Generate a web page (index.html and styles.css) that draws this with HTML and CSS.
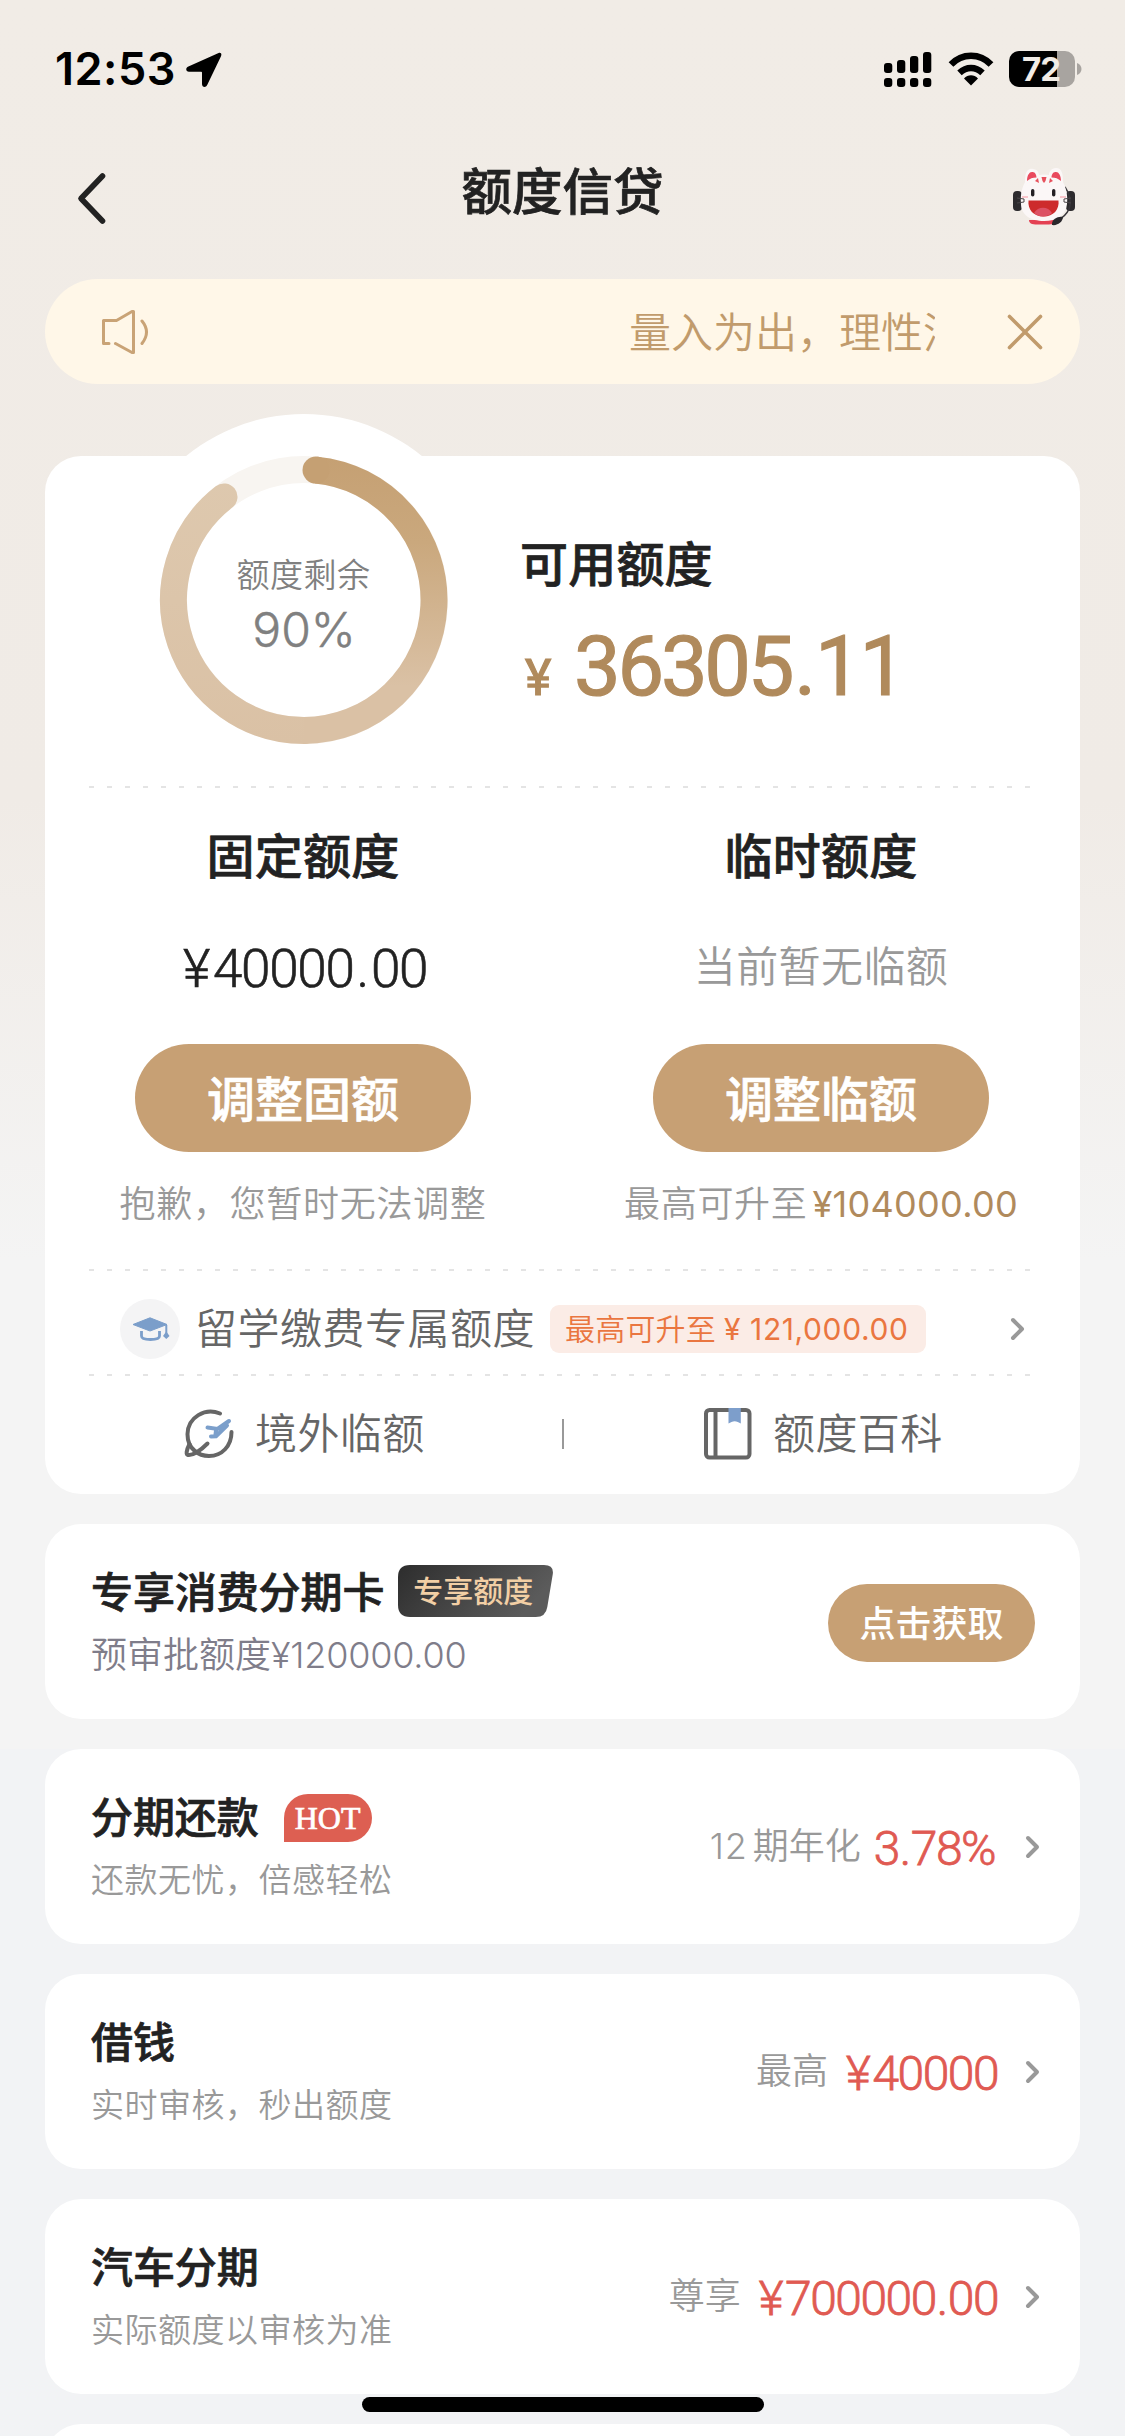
FILE: index.html
```html
<!DOCTYPE html>
<html lang="zh-CN">
<head>
<meta charset="utf-8">
<title>额度信贷</title>
<link rel="stylesheet" href="styles.css">
</head>
<body>
<div class="page">
  <div class="statusbar">
    <span class="clock">12:53</span>
    <svg class="location" width="36" height="36" viewBox="0 0 36 36"><path d="M32.6.9 2.4 14.4C-.9 15.9-.2 19.7 3 19.7h12.2c.5 0 .8.3.8.8V32c0 3.500 3.900 3.900 5.200 1L35 4.200C36 1.700 34.800 0 32.600.9z"/></svg>
    <svg class="signal" width="48" height="36" viewBox="0 0 48 36">
      <rect x="0" y="12" width="8.300" height="10" rx="3"/><rect x="13" y="9" width="8.300" height="13" rx="3"/><rect x="26" y="5" width="8.300" height="17" rx="3"/><rect x="39" y="1" width="8.300" height="21" rx="3"/>
      <rect x="0" y="27" width="8.300" height="9" rx="3"/><rect x="13" y="27" width="8.300" height="9" rx="3"/><rect x="26" y="27" width="8.300" height="9" rx="3"/><rect x="39" y="27" width="8.300" height="9" rx="3"/>
    </svg>
    <svg class="wifi" width="46" height="34" viewBox="0 0 46 34">
      <path d="M3 12.500C14 .8 32 .8 43 12.500M11.500 20.800c7-6.500 16-6.500 23 0" fill="none" stroke="#000" stroke-width="6.500"/>
      <path d="M23 33.500 16 26.500c4-4.200 10-4.200 14 0z"/>
    </svg>
    <div class="battery"><span class="level">72</span></div>
    <svg class="nub" width="5" height="12" viewBox="0 0 5 12"><path d="M0 0c6 2 6 10 0 12z" fill="#a8a4a0"/></svg>
  </div>

  <div class="navbar">
    <svg class="back" width="32" height="56" viewBox="0 0 32 56"><path d="M27.500 6 6 28.500 27.500 51" fill="none" stroke="#222" stroke-width="5.600" stroke-linecap="round" stroke-linejoin="round"/></svg>
    <h1>额度信贷</h1>
    <svg class="mascot" width="64" height="58" viewBox="0 0 64 58">
      <rect x="1" y="23" width="9" height="20" rx="4" fill="#2d2b2e"/><rect x="54" y="23" width="9" height="20" rx="4" fill="#2d2b2e"/>
      <path d="M53 19c4 6 7 15 4 22q-3 7-12 12" fill="none" stroke="#38353a" stroke-width="1.500"/>
      <path d="M17 52h30c0 5-5 4-10 4.500H27c-5 0-10 0-10-4.500z" fill="#e44052"/>
      <path d="M9 36C8 25 11 18 13 14c0-9 2-14 8-13 4 0 6 4 6 6q5-1 10 0c0-3 2-7 7-7 6 0 7 6 7 14 3 6 5 13 4 22-1 11-10 17-23 17S9 47 9 36z" fill="#fbf7f7"/>
      <path d="M15 13c0-6 2.500-9.500 5.500-9 3 0 4 3.500 4 5.500-4 0-6.500 1-9.500 3.500zM49 13c0-6-2.500-9.500-5.500-9-3 0-4 3.500-4 5.500 4 0 6.500 1 9.500 3.500z" fill="#e94a5e"/>
      <path d="M29.500 9h5l-1 4-1.500 2-1.500-2zM23 13l3-3 1 5zM41 13l-3-3-1 5z" fill="#e7505c"/>
      <rect x="19" y="21" width="3.400" height="7.500" rx="1.700" fill="#242124"/><rect x="40" y="21" width="3.400" height="7.500" rx="1.700" fill="#242124"/>
      <path d="M10 29h6M48 29h6" stroke="#f9c6cc" stroke-width="2"/>
      <path d="M5 30l7 1v3l-7 1M59 30l-7 1v3l7 1" fill="none" stroke="#4b4649" stroke-width="1"/>
      <path d="M16.500 32.500h30c1 9-5 16-15 16s-16-7-15-16z" fill="#cd2b2c"/>
      <path d="M22 45c4-7 14-7 18 0-4 4-13 5-18 0z" fill="#dc5164"/>
      <path d="M40 56c0-5 6-8 11-7 0 4-5 9-11 8z" fill="#29272b"/>
    </svg>
  </div>

  <div class="notice">
    <svg class="speaker" width="50" height="46" viewBox="0 0 50 46" fill="none" stroke="#c9a376" stroke-width="3" stroke-linecap="round" stroke-linejoin="round">
      <path d="M9 34.500H3.500v-23h13L32 2.500h1.500v41H32L15.500 34.500M42 12q9 11 0 22.500"/>
    </svg>
    <div class="ticker">量入为出，理性消</div>
    <svg class="close" width="36" height="36" viewBox="0 0 36 36"><path d="M2.500 2.500l31 31M33.500 2.500l-31 31" stroke="#c19b6c" stroke-width="3.600" stroke-linecap="round"/></svg>
  </div>

  <div class="card limits">
    <div class="hero">
      <div class="gauge">
        <svg width="372" height="372" viewBox="0 0 372 372" fill="none" stroke-width="27">
          <defs>
            <linearGradient id="right" x1="0" y1="42" x2="0" y2="330" gradientUnits="userSpaceOnUse"><stop offset="0" stop-color="#c5a073"/><stop offset=".3" stop-color="#caa87d"/><stop offset=".8" stop-color="#dac1a5"/><stop offset="1" stop-color="#dac1a5"/></linearGradient>
            <linearGradient id="left" x1="0" y1="42" x2="0" y2="330" gradientUnits="userSpaceOnUse"><stop offset="0" stop-color="#dec9af"/><stop offset="1" stop-color="#dac1a5"/></linearGradient>
          </defs>
          <circle cx="186" cy="186" r="130.500" stroke="#f8f5f1"/>
          <path d="M186 316.500A130.500 130.500 0 0 1 106 82.900" stroke="url(#left)" stroke-linecap="round"/>
          <path d="M198 56.100A130.500 130.500 0 0 1 186 316.500" stroke="url(#right)"/>
          <circle cx="198" cy="56.100" r="13.500" fill="#c5a073"/>
        </svg>
        <div class="gauge-text"><span class="gauge-label">额度剩余</span><span class="gauge-value">90%</span></div>
      </div>
      <div class="available">
        <h2>可用额度</h2>
        <div class="amount"><span class="yen">¥</span><span>36305<span class="point">.</span><span class="ones">11</span></span></div>
      </div>
    </div>
    <div class="dash"></div>
    <div class="columns">
      <section class="column">
        <h2>固定额度</h2>
        <div class="fixed"><span class="yen">¥</span>40000<span class="point">.</span>00</div>
        <button class="pill">调整固额</button>
        <p class="hint">抱歉，您暂时无法调整</p>
      </section>
      <section class="column">
        <h2>临时额度</h2>
        <div class="none">当前暂无临额</div>
        <button class="pill">调整临额</button>
        <p class="hint">最高可升至<span class="max">¥104000.00</span></p>
      </section>
    </div>
    <div class="dash"></div>
    <div class="study">
      <svg width="60" height="60" viewBox="0 0 60 60">
        <circle cx="30" cy="30" r="30" fill="#f4f4f5"/>
        <path d="M13 25.500 30 18.800 47 25.500 30 32z" fill="#7b9eca" stroke="#7b9eca" stroke-width="1" stroke-linejoin="round"/>
        <path d="M21.500 32v5q0 3.500 9 3.500t9-3.500v-5" fill="none" stroke="#7b9eca" stroke-width="2.800"/>
        <path d="M46.300 26v9" stroke="#7b9eca" stroke-width="2"/><path d="M46.300 32.500 49.500 37 46.300 40 43 37z" fill="#7b9eca"/>
      </svg>
      <span class="study-title">留学缴费专属额度</span>
      <span class="tag">最高可升至<span class="tag-num"><span class="tag-yen">¥</span>121,000.00</span></span>
      <svg class="arrow" width="16" height="24" viewBox="0 0 16 24"><path d="M3 3l9 9-9 9" /></svg>
    </div>
    <div class="dash"></div>
    <div class="links">
      <div class="link">
        <svg width="50" height="52" viewBox="0 0 50 52" fill="none" stroke="#666" stroke-width="4" stroke-linecap="round">
          <path d="M36 5.500C21-.5 4 9 3.500 26 3.400 41 15 48 25 48c13 0 22.500-10 22.500-24"/>
          <path d="M5.500 36C2 43 2 46.500 4 47c4 .8 12-3.800 19.500-11.500"/>
          <path d="M23.500 19.500l10 1.500L45 13M27 28.500l5-.3L43 17.500M32 22.500l-.5 4" stroke="#7b9fcb" stroke-width="4"/>
        </svg>
        <span>境外临额</span>
      </div>
      <i class="bar"></i>
      <div class="link link-book">
        <svg width="48" height="52" viewBox="0 0 48 52" fill="none" stroke="#666" stroke-width="4">
          <rect x="2" y="2" width="43.500" height="47.500" rx="3.500"/><path d="M11.500 2v47.500"/>
          <path d="M24.500 0h12.300v15.500l-3-1.500q-3.200-1.400-6.300 0l-3 1.500z" fill="#7d9ecb" stroke="none"/>
        </svg>
        <span>额度百科</span>
      </div>
    </div>
  </div>

  <div class="card product">
    <div class="product-main">
      <h3>专享消费分期卡<span class="vip"><svg width="155" height="52" viewBox="0 0 155 52"><defs><linearGradient id="dark" x1="0" y1="0" x2="1" y2=".3"><stop offset="0" stop-color="#2d2d2d"/><stop offset="1" stop-color="#5b5b5b"/></linearGradient></defs><path d="M12 0h134q10 0 8.800 9l-5.500 33q-1.500 10-11.500 10H12Q0 52 0 40V12Q0 0 12 0z" fill="url(#dark)"/></svg><span class="vip-text">专享额度</span></span></h3>
      <p class="preapproved">预审批额度<span>¥120000.00</span></p>
    </div>
    <button class="get">点击获取</button>
  </div>

  <div class="card product">
    <div class="product-main">
      <h3>分期还款<span class="hot">HOT</span></h3>
      <p>还款无忧，倍感轻松</p>
    </div>
    <span class="note"><span class="num">12</span>期年化</span>
    <span class="rate percent">3<span class="point">.</span>78%</span>
    <svg class="arrow" width="16" height="24" viewBox="0 0 16 24"><path d="M3 3l9 9-9 9" /></svg>
  </div>

  <div class="card product">
    <div class="product-main">
      <h3>借钱</h3>
      <p>实时审核，秒出额度</p>
    </div>
    <span class="note">最高</span>
    <span class="rate"><span class="yen">¥</span>40000</span>
    <svg class="arrow" width="16" height="24" viewBox="0 0 16 24"><path d="M3 3l9 9-9 9" /></svg>
  </div>

  <div class="card product">
    <div class="product-main">
      <h3>汽车分期</h3>
      <p>实际额度以审核为准</p>
    </div>
    <span class="note">尊享</span>
    <span class="rate"><span class="yen">¥</span>700000<span class="point">.</span>00</span>
    <svg class="arrow" width="16" height="24" viewBox="0 0 16 24"><path d="M3 3l9 9-9 9" /></svg>
  </div>

  <div class="card product"></div>
  <div class="home-indicator"></div>
</div>
</body>
</html>
```
FILE: styles.css
```css
* { box-sizing: border-box; }
body, h1, h2, h3, p { margin: 0; }
body { font-family: "Noto Sans CJK SC", sans-serif; color: #222; }
svg { display: block; flex: none; }
button { border: 0; padding: 0; font-family: inherit; color: #fff; background: #c7a074; }
h1, h2, h3, .pill { -webkit-text-stroke: .7px currentColor; }

.page {
  position: relative;
  width: 1125px;
  height: 2436px;
  overflow: hidden;
  padding: 0 45px;
  background: linear-gradient(#f1ece6 0, #f0ebe6 800px, #f4f4f4 1260px, #f4f4f4 1749px, #f2f3f5 1749px);
}

.statusbar { display: flex; align-items: flex-start; height: 141px; padding-top: 51px; margin-right: -45px; }
.clock { width: 131px; margin-left: 10px; font: 600 45px/36px Inter, sans-serif; letter-spacing: .5px; color: #000; }
.location { margin-top: 1px; }
.signal { margin-left: 662px; }
.wifi { margin: 1px 0 0 16px; }
.battery { width: 66px; height: 36px; margin-left: 15px; border-radius: 10px; background: linear-gradient(90deg, #000 48px, #a8a4a0 48px); }
.level { display: block; padding-right: 2px; text-align: center; font: 700 33px/37px Inter, sans-serif; letter-spacing: -1px; color: #f1ece6; }
.nub { margin: 12px 0 0 2px; }

.navbar { display: flex; align-items: flex-start; height: 138px; }
.back { margin: 29px 0 0 30px; }
.navbar h1 { flex: 1; margin-left: 6px; padding-top: 10px; text-align: center; font-size: 50.500px; line-height: 74px; font-weight: 500; }
.mascot { margin: 27px 4px 0 0; }

.notice { display: flex; align-items: center; height: 105px; border-radius: 53px; background: #fff7e8; padding: 0 37px 0 55px; }
.ticker { width: 307px; margin: -3px 72px 0 479px; overflow: hidden; white-space: nowrap; font-size: 42px; line-height: 60px; font-weight: 350; color: #c19b6c; }

.card { background: #fff; border-radius: 36px; }
.limits { height: 1038px; margin-top: 72px; padding: 0 42px; }
.limits h2 { font-size: 48px; line-height: 70px; font-weight: 500; letter-spacing: .2px; }

.hero { display: flex; height: 330px; }
.gauge { display: grid; width: 372px; height: 372px; margin: -42px 0 0 31px; border-radius: 50%; background: #fff; }
.gauge > * { grid-area: 1 / 1; }
.gauge-text { display: flex; flex-direction: column; align-items: center; padding-top: 135px; color: #808080; }
.gauge-label { margin-left: -1px; font-size: 33px; line-height: 48px; font-weight: 350; letter-spacing: .5px; }
.gauge-value { margin-top: 9px; font: 300 48px/48px Inter, sans-serif; -webkit-text-stroke: .5px currentColor; }
.available { margin-left: 30px; padding-top: 70px; }
.amount { display: flex; align-items: baseline; margin-top: 21px; font: 400 83px/100px Roboto, sans-serif; letter-spacing: -3.200px; color: #b08a5c; -webkit-text-stroke: 1.200px currentColor; }
.amount .yen { width: 54px; padding-left: 5px; font-size: 50px; }
.amount .point { margin: 0 2px 0 3px; }
.amount .ones { letter-spacing: -2px; }

.dash { height: 2px; margin-right: 6px; background: repeating-linear-gradient(90deg, transparent 0 2px, #e4e4e4 2px 7px, transparent 7px 18px); }

.columns { display: flex; gap: 2px; height: 481px; margin-left: -42px; }
.column { display: flex; flex: none; flex-direction: column; align-items: center; width: 516px; padding-top: 30px; }
.fixed, .none { height: 66px; line-height: 66px; }
.fixed { margin: 48px 0 0 4px; font-family: Roboto, sans-serif; font-size: 53px; font-weight: 300; letter-spacing: -1.300px; -webkit-text-stroke: .6px currentColor; }
.fixed .yen { margin-right: 4px; }
.fixed .point { margin: 0 3px; }
.none { margin: 43px 0 5px; font-size: 42px; font-weight: 350; letter-spacing: .4px; color: #999; }
.pill { width: 336px; height: 108px; margin-top: 42px; padding-bottom: 5px; border-radius: 54px; font-size: 48px; font-weight: 500; line-height: 70px; }
.hint { margin-top: 23px; font-size: 36px; line-height: 52px; font-weight: 350; letter-spacing: .7px; color: #999; white-space: nowrap; }
.max { margin-left: 5px; font: 400 36px/52px Inter, sans-serif; letter-spacing: .3px; color: #b08a5c; }

.study { display: flex; align-items: center; height: 103px; padding: 13px 0 0 33px; }
.study-title { margin: -6px 0 0 15px; width: 355px; font-size: 42px; line-height: 60px; font-weight: 350; letter-spacing: .5px; color: #666; white-space: nowrap; }
.tag { display: flex; width: 376px; height: 48px; padding-left: 15px; border-radius: 9px; background: #fbece6; font-size: 30px; line-height: 44px; color: #ea7640; white-space: nowrap; font-weight: 350; letter-spacing: .2px; }
.tag-num { font: 400 30px/48px Inter, sans-serif; letter-spacing: .6px; }
.tag-yen { margin: 0 9px 0 8px; }
.arrow path { fill: none; stroke: #999; stroke-width: 4; stroke-linecap: round; stroke-linejoin: round; }
.study .arrow { margin-left: 84px; }

.links { display: flex; align-items: center; height: 116px; padding-left: 97px; }
.link { display: flex; flex: none; align-items: center; width: 378px; gap: 21px; font-size: 42px; line-height: 60px; font-weight: 350; letter-spacing: .4px; color: #666; }
.link span { margin-top: -6px; }
.bar { flex: none; width: 2px; height: 30px; background: #999; }
.link-book { margin-left: 140px; gap: 21px; }

.product { display: flex; height: 195px; margin-top: 30px; padding: 0 39px 0 46px; }
.product-main { flex: 1; padding-top: 36px; }
.product h3 { display: flex; align-items: center; height: 60px; font-size: 42px; line-height: 60px; font-weight: 500; letter-spacing: -.1px; white-space: nowrap; }
.product p { margin-top: 9px; font-size: 33px; line-height: 48px; font-weight: 350; letter-spacing: .5px; color: #999; white-space: nowrap; }
.product .preapproved { margin-top: 6px; font-size: 36px; line-height: 52px; letter-spacing: 0; color: #7f7d8a; }
.preapproved span { font: 300 36px/52px Inter, sans-serif; letter-spacing: -.2px; }
.vip { display: grid; margin: 1px 0 0 14px; -webkit-text-stroke: 0; letter-spacing: 0; }
.vip > * { grid-area: 1 / 1; }
.vip-text { padding-left: 15px; font-size: 30px; line-height: 48px; color: #f2cfa5; }
.hot { width: 88px; height: 48px; margin: 6px 0 0 25px; border-radius: 24px 24px 24px 0; background: #dd5f52; color: #fff; text-align: center; letter-spacing: 0; font: 400 32px/48px "Liberation Serif", serif; }
.get { width: 207px; height: 78px; margin: 60px 6px 0 0; padding-bottom: 5px; border-radius: 39px; font-size: 36px; line-height: 52px; font-weight: 500; }
.note { margin-top: 68px; font-size: 36px; line-height: 52px; font-weight: 350; color: #999; }
.note .num { margin-right: 5px; font: 300 36px/52px Inter, sans-serif; letter-spacing: .8px; }
.rate { margin: 70px 0 0 14px; font: 300 48px/60px Roboto, sans-serif; letter-spacing: -1.500px; color: #e05a52; -webkit-text-stroke: .8px currentColor; }
.rate .yen { margin: 0 3px 0 4px; }
.rate .point { margin: 0 1px; }
.rate.percent { margin: 70px 3px 0 13px; }
.product .arrow { margin: 86px 0 0 27px; }

.home-indicator { position: absolute; left: 362px; top: 2397px; width: 402px; height: 15px; border-radius: 8px; background: #000; }
```
